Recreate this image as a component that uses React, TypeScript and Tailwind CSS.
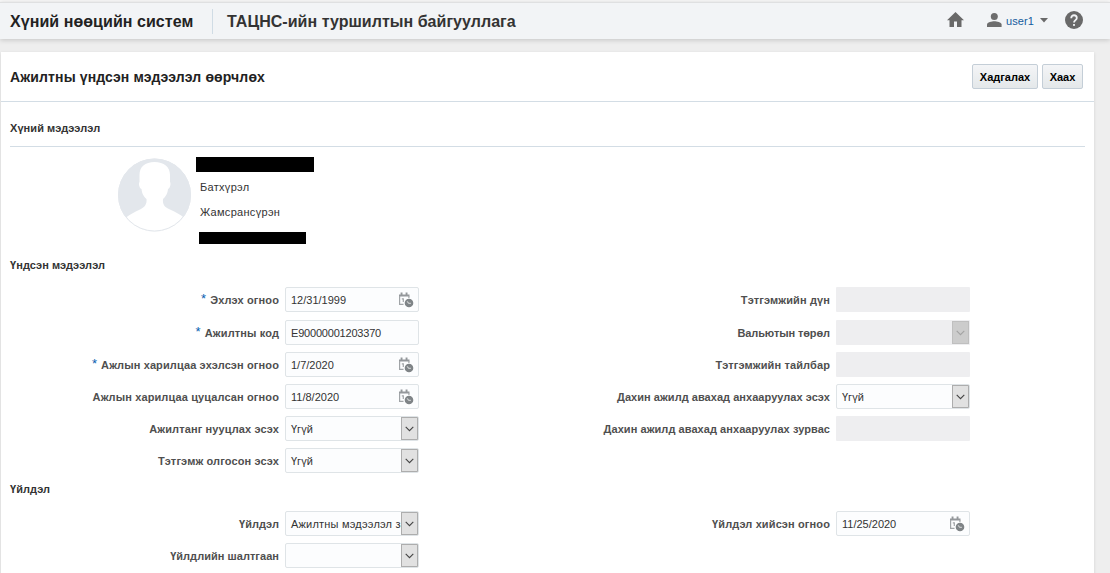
import type { ReactNode } from "react";

type FieldKind = "date" | "text" | "select" | "readonly" | "readonlySelect";

interface FieldProps {
  label: string;
  value?: string;
  kind: FieldKind;
  required?: boolean;
  valueClass?: string;
  labelClass?: string;
}

function CalendarClockIcon() {
  return (
    <svg width="16" height="16" viewBox="0 0 16 16" className="shrink-0">
      <path d="M1 2.600h10.500v2H1z" fill="#94989b" />
      <path d="M2.600 0.500h1.900v3H2.600zM7.600 0.500h1.900v3H7.600z" fill="#94989b" />
      <path d="M1.600 4v8.400H5.500M10.900 4v2" fill="none" stroke="#a0a4a7" strokeWidth="1.200" />
      <path d="M3.800 6.800h1.500v3.200" fill="none" stroke="#a0a4a7" strokeWidth="1.200" />
      <circle cx="11" cy="11" r="4.300" fill="#7f8487" />
      <path d="M9 9.400l1.900 1.900h2" fill="none" stroke="#c9cccd" strokeWidth="1.200" />
    </svg>
  );
}

function SelectArrow({ muted = false }: { muted?: boolean }) {
  return (
    <span
      className={
        muted
          ? "flex h-[23px] w-[17px] shrink-0 items-center justify-center border border-[#bfbfbf] bg-[#cccccc] text-[#a3a3a3]"
          : "flex h-[23px] w-[17px] shrink-0 items-center justify-center border border-[#adadad] bg-[#e1e1e1] text-[#444444]"
      }
    >
      <svg width="9" height="6" viewBox="0 0 9 6">
        <path d="M0.700 0.800L4.500 4.600L8.300 0.800" fill="none" stroke="currentColor" strokeWidth="1.100" />
      </svg>
    </span>
  );
}

function Control({ kind, value, valueClass = "" }: { kind: FieldKind; value?: string; valueClass?: string }) {
  if (kind === "readonly") {
    return <div className="h-[25px] w-[134px] shrink-0 rounded-[1px] bg-[#eeeef0]" />;
  }
  if (kind === "readonlySelect") {
    return (
      <div className="flex h-[25px] w-[134px] shrink-0 items-center justify-end rounded-[1px] bg-[#eeeef0] pr-px">
        <SelectArrow muted />
      </div>
    );
  }
  return (
    <div className="flex h-[25px] w-[134px] shrink-0 items-center overflow-hidden rounded-[2px] border border-[#dfe4e7] bg-[#fcfdfe]">
      <span
        className={`min-w-0 flex-1 overflow-hidden pt-px pl-[5px] text-[11px] leading-[23px] whitespace-nowrap text-[#333333] ${valueClass}`}
      >
        {value}
      </span>
      {kind === "select" && <SelectArrow />}
      {kind === "date" && (
        <span className="flex shrink-0 pr-1">
          <CalendarClockIcon />
        </span>
      )}
    </div>
  );
}

function Field({ label, value, kind, required, valueClass, labelClass = "tracking-[0.12px]" }: FieldProps) {
  return (
    <div className="flex h-[25px] items-center justify-end gap-1.5">
      <span className={`flex pt-px text-[11px] leading-[25px] font-bold whitespace-nowrap text-[#4f4f4f] ${labelClass}`}>
        {required && <span className="-mt-[2px] mr-1 text-[13px] font-normal text-[#0560b0]">*</span>}
        <span>{label}</span>
      </span>
      <Control kind={kind} value={value} valueClass={valueClass} />
    </div>
  );
}

function SectionTitle({ children }: { children: ReactNode }) {
  return <h2 className="text-[11px] leading-4 font-bold tracking-[0.07px] text-[#333333]">{children}</h2>;
}

function ActionButton({ children, className }: { children: ReactNode; className: string }) {
  return (
    <button
      className={`h-[25px] rounded-[2px] border border-[#c4ced7] bg-linear-to-b from-[#f4f5f7] to-[#e4e8ea] pt-px text-center text-[11px] leading-[22px] font-bold text-black ${className}`}
    >
      {children}
    </button>
  );
}

function Avatar() {
  return (
    <svg width="74" height="74" viewBox="0 0 74 74" className="shrink-0">
      <defs>
        <clipPath id="avatar-clip">
          <circle cx="36.500" cy="37" r="36.500" />
        </clipPath>
      </defs>
      <g clipPath="url(#avatar-clip)">
        <rect width="74" height="74" fill="#e3e7ec" />
        <path
          d="M36.500 4C27 4 21.500 9 21.500 17V24C20.500 25 21 30 23.500 31C24 36 25.500 38 28.500 41C29 46 27 49 22 51.500C17 54 12 56 8 59.500V74H66V59.500C62 56 57 54 52 51.500C46 49 44.500 46 45 41C48 38 49.500 36 50 31C52.500 30 53 25 52 24V17C52 9 46 4 36.500 4Z"
          fill="#ffffff"
        />
      </g>
      <circle cx="36.500" cy="37" r="36" fill="none" stroke="#e3e7ec" strokeWidth="1" />
    </svg>
  );
}

function Header() {
  return (
    <header className="relative flex h-[37px] items-center border-t border-[#dfe0e1] bg-[#f2f4f6] shadow-[0_1px_5px_rgba(0,0,0,0.18)]">
      <span className="w-[202px] pt-[2px] pl-2.5 text-[16px] leading-5 font-bold tracking-[0.06px] whitespace-nowrap text-[#222222]">
        Хүний нөөцийн систем
      </span>
      <span className="ml-[10px] h-[25px] w-px bg-[#d0dce5]" />
      <span className="ml-[14px] pt-[2px] text-[16px] leading-5 font-bold tracking-[0.04px] whitespace-nowrap text-[#333333]">
        ТАЦНС-ийн туршилтын байгууллага
      </span>
      <div className="ml-auto flex items-center pr-[27px] pb-[3px]">
        <svg width="17" height="15" viewBox="0 0 17 15" fill="#696969">
          <path d="M8.500 0L17 8.200H14.500V15H10V9.500H7V15H2.500V8.200H0Z" />
        </svg>
        <svg width="15" height="14" viewBox="0 0 15 14" fill="#6d6d6d" className="ml-[23px]">
          <circle cx="7.300" cy="3.500" r="3.500" />
          <path d="M0 14V11.500C0 9.300 5 8.300 7.300 8.300S14.600 9.300 14.600 11.500V14Z" />
        </svg>
        <span className="ml-1 pt-[3px] text-[11px] leading-4 tracking-[0.1px] text-[#145c9e]">user1</span>
        <svg width="8" height="5" viewBox="0 0 8 5" fill="#696969" className="mt-px ml-[6px]">
          <path d="M0 0H8L4 4.500Z" />
        </svg>
        <svg width="18" height="18" viewBox="0 0 18 18" className="ml-[17px]">
          <circle cx="9" cy="9" r="9" fill="#696969" />
          <path
            d="M6.200 7.200C6.200 3.200 11.800 3.400 11.800 7C11.800 9.100 9 9.200 9 11.600"
            fill="none"
            stroke="#f2f4f6"
            strokeWidth="1.800"
          />
          <rect x="8.100" y="13" width="1.800" height="1.900" fill="#f2f4f6" />
        </svg>
      </div>
    </header>
  );
}

export default function App() {
  return (
    <div className="h-[573px] w-[1110px] overflow-hidden bg-[#eeeeee] font-['Liberation_Sans',Arial,sans-serif]">
      <div className="h-[2px] bg-[#f8f8f8]" />
      <Header />
      <main className="mt-[13px] ml-px h-[540px] w-[1093px] bg-white shadow-[0_1px_3px_rgba(0,0,0,0.12)]">
        <div className="flex h-[50px] items-center justify-between border-b border-[#d3dde5] pr-[11px] pl-[9px]">
          <h1 className="text-[14px] leading-5 font-bold tracking-[0.13px] whitespace-nowrap text-[#222222]">
            Ажилтны үндсэн мэдээлэл өөрчлөх
          </h1>
          <div className="flex gap-1">
            <ActionButton className="w-[66px]">Хадгалах</ActionButton>
            <ActionButton className="w-[41px]">Хаах</ActionButton>
          </div>
        </div>
        <section className="pr-[9px] pl-[9px]">
          <div className="h-[45px] border-b border-[#d3dde5] pt-[18px]">
            <SectionTitle>Хүний мэдээлэл</SectionTitle>
          </div>
          <div className="flex h-[110px] pt-[10px] pl-[108px]">
            <div className="pt-px">
              <Avatar />
            </div>
            <div className="flex flex-col pl-1 text-[11px] leading-[25px] tracking-[0.3px] text-[#333333]">
              <div className="h-[15px] w-[118px] bg-black" />
              <span className="mt-[3px] pl-1">Батхүрэл</span>
              <span className="pl-1">Жамсрансүрэн</span>
              <div className="mt-[7px] ml-[3px] h-3 w-[107px] shrink-0 bg-black" />
            </div>
          </div>
        </section>
        <section className="pl-[9px]">
          <SectionTitle>Үндсэн мэдээлэл</SectionTitle>
          <div className="mt-[14px] flex gap-[151px]">
            <div className="flex w-[409px] flex-col gap-[7px]">
              <Field required label="Эхлэх огноо" value="12/31/1999" kind="date" />
              <div className="mt-px flex flex-col gap-[7px]">
                <Field
                  required
                  label="Ажилтны код"
                  value="E90000001203370"
                  kind="text"
                  valueClass="tracking-[-0.2px]"
                />
                <Field required label="Ажлын харилцаа эхэлсэн огноо" value="1/7/2020" kind="date" />
                <Field label="Ажлын харилцаа цуцалсан огноо" value="11/8/2020" kind="date" />
                <Field label="Ажилтанг нууцлах эсэх" value="Үгүй" kind="select" />
                <Field label="Тэтгэмж олгосон эсэх" value="Үгүй" kind="select" />
              </div>
            </div>
            <div className="flex w-[400px] flex-col gap-[7px]">
              <Field label="Тэтгэмжийн дүн" kind="readonly" />
              <div className="mt-px flex flex-col gap-[7px]">
                <Field label="Вальютын төрөл" kind="readonlySelect" labelClass="-tracking-[0.1px]" />
                <Field label="Тэтгэмжийн тайлбар" kind="readonly" />
                <Field
                  label="Дахин ажилд авахад анхааруулах эсэх"
                  value="Үгүй"
                  kind="select"
                  labelClass="tracking-[0.04px]"
                />
                <Field
                  label="Дахин ажилд авахад анхааруулах зурвас"
                  kind="readonly"
                  labelClass="tracking-[0.06px]"
                />
              </div>
            </div>
          </div>
        </section>
        <section className="mt-2 pl-[9px]">
          <SectionTitle>Үйлдэл</SectionTitle>
          <div className="mt-[14px] flex gap-[151px]">
            <div className="flex w-[409px] flex-col gap-[7px]">
              <Field
                label="Үйлдэл"
                value="Ажилтны мэдээлэл за"
                kind="select"
                valueClass="tracking-[0.2px]"
                labelClass="tracking-[0.04px]"
              />
              <Field label="Үйлдлийн шалтгаан" kind="select" labelClass="tracking-[0.04px]" />
            </div>
            <div className="flex w-[400px] flex-col gap-[7px]">
              <Field label="Үйлдэл хийсэн огноо" value="11/25/2020" kind="date" />
            </div>
          </div>
        </section>
      </main>
    </div>
  );
}
